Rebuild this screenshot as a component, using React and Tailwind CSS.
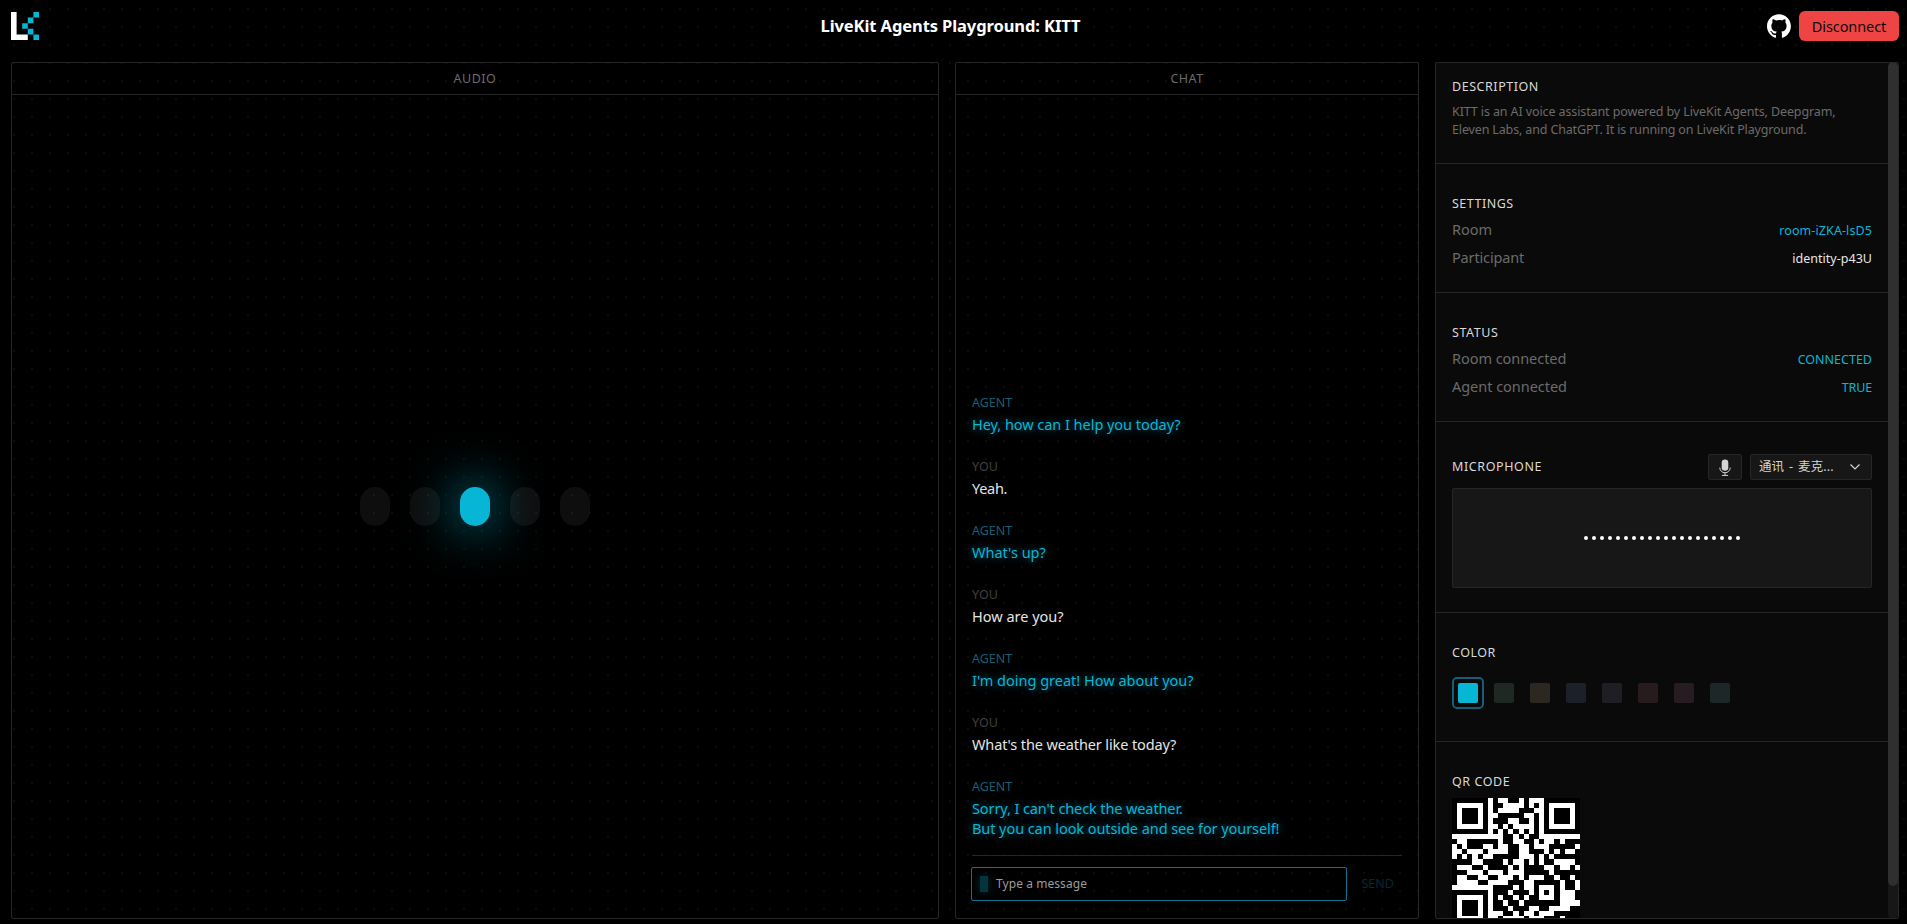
import React from "react";

/* ---- QR code: version 2, error correction M, mask 6 ---- */
const SIZE = 25;

function gfMultiply(x, y) {
  let z = 0;
  for (let i = 7; i >= 0; i--) {
    z = (z << 1) ^ ((z >>> 7) * 0x11d);
    z ^= ((y >>> i) & 1) * x;
  }
  return z;
}

function errorCorrection(data, degree) {
  const divisor = new Array(degree).fill(0);
  divisor[degree - 1] = 1;
  let root = 1;
  for (let i = 0; i < degree; i++) {
    for (let j = 0; j < degree; j++) {
      divisor[j] = gfMultiply(divisor[j], root);
      if (j + 1 < degree) divisor[j] ^= divisor[j + 1];
    }
    root = gfMultiply(root, 2);
  }
  const result = new Array(degree).fill(0);
  for (const b of data) {
    const factor = b ^ result.shift();
    result.push(0);
    divisor.forEach((c, i) => (result[i] ^= gfMultiply(c, factor)));
  }
  return result;
}

function buildQr(text) {
  const bits = [];
  const push = (v, n) => {
    for (let i = n - 1; i >= 0; i--) bits.push((v >>> i) & 1);
  };
  push(4, 4);
  push(text.length, 8);
  for (const ch of text) push(ch.charCodeAt(0), 8);
  push(0, Math.min(4, 28 * 8 - bits.length));
  while (bits.length % 8) bits.push(0);
  for (let pad = 0xec; bits.length < 28 * 8; pad ^= 0xec ^ 0x11) push(pad, 8);
  const data = [];
  for (let i = 0; i < bits.length; i += 8) data.push(parseInt(bits.slice(i, i + 8).join(""), 2));
  const words = data.concat(errorCorrection(data, 16));

  const grid = Array.from({ length: SIZE }, () => new Array(SIZE).fill(null));
  const set = (x, y, v) => {
    if (x >= 0 && y >= 0 && x < SIZE && y < SIZE) grid[y][x] = v ? 1 : 0;
  };
  for (let i = 0; i < SIZE; i++) {
    set(6, i, i % 2 === 0);
    set(i, 6, i % 2 === 0);
  }
  for (const [cx, cy] of [[3, 3], [SIZE - 4, 3], [3, SIZE - 4]]) {
    for (let dy = -4; dy <= 4; dy++)
      for (let dx = -4; dx <= 4; dx++) {
        const d = Math.max(Math.abs(dx), Math.abs(dy));
        set(cx + dx, cy + dy, d !== 2 && d !== 4);
      }
  }
  for (let dy = -2; dy <= 2; dy++)
    for (let dx = -2; dx <= 2; dx++) set(18 + dx, 18 + dy, Math.max(Math.abs(dx), Math.abs(dy)) !== 1);

  const format = 0b100111110010111;
  const bit = (i) => (format >>> i) & 1;
  for (let i = 0; i <= 5; i++) set(8, i, bit(i));
  set(8, 7, bit(6));
  set(8, 8, bit(7));
  set(7, 8, bit(8));
  for (let i = 9; i < 15; i++) set(14 - i, 8, bit(i));
  for (let i = 0; i < 8; i++) set(SIZE - 1 - i, 8, bit(i));
  for (let i = 8; i < 15; i++) set(8, SIZE - 15 + i, bit(i));
  set(8, SIZE - 8, 1);

  let k = 0;
  for (let right = SIZE - 1; right >= 1; right -= 2) {
    if (right === 6) right = 5;
    for (let v = 0; v < SIZE; v++)
      for (let j = 0; j < 2; j++) {
        const x = right - j;
        const upward = ((right + 1) & 2) === 0;
        const y = upward ? SIZE - 1 - v : v;
        if (grid[y][x] !== null) continue;
        const value = k < words.length * 8 ? (words[k >>> 3] >>> (7 - (k & 7))) & 1 : 0;
        k++;
        const mask = ((((x * y) % 2) + ((x * y) % 3)) % 2) === 0 ? 1 : 0;
        grid[y][x] = value ^ mask;
      }
  }
  return grid;
}

function QrCode({ value }) {
  const d = buildQr(value)
    .map((row, y) => row.map((v, x) => (v ? `M${x} ${y}h1v1h-1z` : "")).join(""))
    .join("");
  return (
    <svg className="block shrink-0" width="128" height="128" viewBox="0 0 25 25" shapeRendering="crispEdges">
      <path fill="#fff" d="M0 0h25v25H0z" />
      <path fill="#000" d={d} />
    </svg>
  );
}

function Logo() {
  return (
    <svg className="block" width="28" height="28" viewBox="0 0 28 28" fill="none">
      <path d="M0 0h5.6v22.4h11.2V28H0z" fill="#fff" />
      <g fill="#06b6d4">
        <path d="M22.4 0H28v5.6h-5.6zM16.8 5.6h5.6v5.6h-5.6zM11.2 11.2h5.6v5.6h-5.6zM16.8 16.8h5.6v5.6h-5.6zM22.4 22.4H28V28h-5.6z" />
      </g>
    </svg>
  );
}

function GithubIcon() {
  return (
    <svg className="block" width="24" height="24" viewBox="0 0 98 96" fill="#fff">
      <path
        fillRule="evenodd"
        clipRule="evenodd"
        d="M48.854 0C21.839 0 0 22 0 49.217c0 21.756 13.993 40.172 33.405 46.69 2.427.49 3.316-1.059 3.316-2.362 0-1.141-.08-5.052-.08-9.127-13.59 2.934-16.42-5.867-16.42-5.867-2.184-5.704-5.42-7.17-5.42-7.17-4.448-3.015.324-3.015.324-3.015 4.934.326 7.523 5.052 7.523 5.052 4.367 7.496 11.404 5.378 14.235 4.074.404-3.178 1.699-5.378 3.074-6.6-10.839-1.141-22.243-5.378-22.243-24.283 0-5.378 1.94-9.778 5.014-13.2-.485-1.222-2.184-6.275.486-13.038 0 0 4.125-1.304 13.426 5.052a46.97 46.97 0 0 1 12.214-1.63c4.125 0 8.33.571 12.213 1.63 9.302-6.356 13.427-5.052 13.427-5.052 2.67 6.763.97 11.816.485 13.038 3.155 3.422 5.015 7.822 5.015 13.2 0 18.905-11.404 23.06-22.324 24.283 1.78 1.548 3.316 4.481 3.316 9.126 0 6.6-.08 11.897-.08 13.526 0 1.304.89 2.853 3.316 2.364 19.412-6.52 33.405-24.935 33.405-46.691C97.707 22 75.788 0 48.854 0z"
      />
    </svg>
  );
}

function MicIcon() {
  return (
    <svg className="block" width="12" height="17" viewBox="0 0 12 17" fill="none">
      <rect x="2.7" y="0.4" width="6.6" height="11.4" rx="3.3" fill="#d4d4d4" />
      <path d="M0.8 8.6a5.2 5.2 0 0 0 10.4 0M6 13.8v2.6M2.9 16.4h6.2" stroke="#d4d4d4" strokeWidth="1" />
    </svg>
  );
}

function Panel({ title, className, children }) {
  return (
    <section className={"flex flex-col rounded-xs border border-[#262626] " + className}>
      <div className="flex h-8 shrink-0 items-center justify-center border-b border-[#262626] text-[12.5px] leading-4 tracking-[0.5px] text-[#6b6b6b]">
        {title}
      </div>
      {children}
    </section>
  );
}

function Message({ from, lines }) {
  const agent = from === "AGENT";
  return (
    <div className="flex flex-col gap-1">
      <div className={"-mb-px pt-px text-[12.5px] leading-4 " + (agent ? "text-[#155e75]" : "tracking-[0.1px] text-[#404040]")}>{from}</div>
      <div
        className={
          "text-[14.5px] leading-5 whitespace-nowrap " +
          (agent ? "text-[#06b6d4] [text-shadow:0_0_8px_#0e7490]" : "text-[#e5e5e5]")
        }
      >
        {lines.map(([text, tracking]) => (
          <div key={text} className={tracking}>{text}</div>
        ))}
      </div>
    </div>
  );
}

const MESSAGES = [
  ["AGENT", [["Hey, how can I help you today?", "tracking-[-0.04px]"]]],
  ["YOU", [["Yeah.", "tracking-[-0.3px]"]]],
  ["AGENT", [["What's up?", "tracking-normal"]]],
  ["YOU", [["How are you?", "tracking-normal"]]],
  ["AGENT", [["I'm doing great! How about you?", "tracking-normal"]]],
  ["YOU", [["What's the weather like today?", "tracking-[-0.12px]"]]],
  [
    "AGENT",
    [
      ["Sorry, I can't check the weather.", "tracking-[-0.11px]"],
      ["But you can look outside and see for yourself!", "tracking-[-0.07px]"],
    ],
  ],
];

function Heading({ className = "-mb-px pt-px tracking-[0.55px]", children }) {
  return <h3 className={"text-[12.5px] leading-4 text-[#d9d9d9] " + className}>{children}</h3>;
}

function Row({ label, labelClass = "", value, valueClass }) {
  return (
    <div className="flex h-5 items-baseline justify-between text-[14.5px] leading-5 text-[#6b6b6b]">
      <span className={labelClass}>{label}</span>
      <span className={"text-[12.5px] leading-4 " + valueClass}>{value}</span>
    </div>
  );
}

const SWATCHES = [
  "bg-[#1f2823]",
  "bg-[#2c2720]",
  "bg-[#1c2029]",
  "bg-[#1f1e25]",
  "bg-[#261c1d]",
  "bg-[#261c21]",
  "bg-[#1d2727]",
];

export default function App() {
  return (
    <div className="flex h-[924px] w-full flex-col overflow-hidden bg-black font-['Noto_Sans','Noto_Sans_CJK_SC',sans-serif]">
      <div className="flex min-h-0 flex-1 flex-col bg-[conic-gradient(from_0deg_at_2px_2px,#000_0deg_270deg,#0c0c0c_270deg_360deg)] bg-[size:18px_18px] bg-[position:13px_8px] pr-2 pb-[5px] pl-[11px]">
        <header className="mb-[10px] grid h-[52px] shrink-0 grid-cols-3 items-center">
          <Logo />
          <h1 className="justify-self-center pr-[9px] text-[16.5px] leading-6 font-bold tracking-[-0.09px] whitespace-nowrap text-white">
            LiveKit Agents Playground: KITT
          </h1>
          <div className="flex items-center gap-2 justify-self-end">
            <GithubIcon />
            <button className="h-[30px] w-[100px] rounded-md bg-[#ef4444] text-[14.5px] leading-5 tracking-[-0.09px] text-[#0a0a0a]">
              Disconnect
            </button>
          </div>
        </header>

        <main className="flex min-h-0 flex-1 gap-4">
          <Panel title="AUDIO" className="w-[928px]">
            <div className="flex flex-1 items-center justify-center gap-5">
              <span className="h-[39px] w-[30px] rounded-full bg-white/[0.055]" />
              <span className="h-[39px] w-[30px] rounded-full bg-white/[0.055]" />
              <span className="h-[39px] w-[30px] rounded-full bg-[#06b6d4] shadow-[0_0_50px_#06b6d4]" />
              <span className="h-[39px] w-[30px] rounded-full bg-white/[0.055]" />
              <span className="h-[39px] w-[30px] rounded-full bg-white/[0.055]" />
            </div>
          </Panel>

          <Panel title="CHAT" className="w-[464px]">
            <div className="flex flex-1 flex-col justify-end px-4 pb-[17px]">
              <div className="flex flex-col gap-6 pb-[17px]">
                {MESSAGES.map(([from, lines], i) => (
                  <Message key={i} from={from} lines={lines} />
                ))}
              </div>
              <div className="flex items-center border-t border-[#262626] pt-[11px]">
                <div className="-ml-px flex h-[34px] w-[376px] items-center rounded-xs border border-[#0e7490] pl-2">
                  <span className="mr-2 h-4 w-2 bg-[#06343c] shadow-[0_0_8px_#06343c]" />
                  <span className="text-[12px] leading-4 tracking-[0.07px] text-[#9c9c9c]">Type a message</span>
                </div>
                <span className="ml-[14.5px] text-[12.5px] leading-4 text-[#042a31]">SEND</span>
              </div>
            </div>
          </Panel>

          <aside className="flex w-[464px] overflow-hidden rounded-xs border border-[#262626] bg-[#0a0a0a]">
            <div className="flex w-[452px] flex-col [&>section]:shrink-0 [&>section]:border-[#262626] [&>section]:px-4">
              <section className="border-b pt-[15px] pb-6">
                <Heading>DESCRIPTION</Heading>
                <p className="mt-2 pt-px text-[12.5px] leading-[18px] whitespace-nowrap text-[#6b6b6b]">
                  <span className="block tracking-[-0.11px]">KITT is an AI voice assistant powered by LiveKit Agents, Deepgram,</span>
                  <span className="block tracking-[-0.145px]">Eleven Labs, and ChatGPT. It is running on LiveKit Playground.</span>
                </p>
              </section>

              <section className="flex flex-col gap-2 border-b pt-[31px] pb-[25px]">
                <Heading className="-mb-px pt-px tracking-[0.5px]">SETTINGS</Heading>
                <Row label="Room" value="room-iZKA-lsD5" valueClass="tracking-[0.1px] text-[#06b6d4]" />
                <Row label="Participant" labelClass="tracking-[-0.15px]" value="identity-p43U" valueClass="tracking-[0.02px] text-[#e5e5e5]" />
              </section>

              <section className="flex flex-col gap-2 border-b pt-[31px] pb-[25px]">
                <Heading>STATUS</Heading>
                <Row label="Room connected" labelClass="tracking-[-0.05px]" value="CONNECTED" valueClass="text-[#06b6d4]" />
                <Row label="Agent connected" labelClass="tracking-[-0.03px]" value="TRUE" valueClass="tracking-[-0.15px] text-[#06b6d4]" />
              </section>

              <section className="border-b pt-8 pb-6">
                <div className="flex h-[26px] items-center">
                  <Heading className="mr-auto tracking-[0.6px]">MICROPHONE</Heading>
                  <button className="flex h-[26px] w-[34px] items-center justify-center rounded-xs border border-[#262626] bg-[#171717]">
                    <MicIcon />
                  </button>
                  <button className="ml-2 flex h-[26px] w-[122px] items-center justify-between rounded-xs border border-[#262626] bg-[#171717] pr-[11px] pl-2 text-[12.5px] leading-4 text-[#d4d4d4]">
                    <span className="tracking-[0.1px] whitespace-nowrap [word-spacing:1.5px]">通讯 - 麦克...</span>
                    <svg width="10" height="6" viewBox="0 0 10 6" fill="none">
                      <path d="M0.5 0.5 5 5 9.5 0.5" stroke="#d4d4d4" strokeWidth="1.2" />
                    </svg>
                  </button>
                </div>
                <div className="mt-2 flex h-[100px] items-center justify-center gap-1 rounded-xs border border-[#262626] bg-[#171717]">
                  {Array.from({ length: 20 }, (_, i) => (
                    <span key={i} className="size-1 rounded-full bg-white shadow-[0_0_20px_2px_#06b6d40d]" />
                  ))}
                </div>
              </section>

              <section className="border-b pt-[31px] pb-8">
                <Heading className="-mb-px pt-px tracking-[0.5px]">COLOR</Heading>
                <div className="mt-[17px] flex items-center gap-4">
                  <span className="-mr-1.5 flex size-8 items-center justify-center rounded-[5px] border-2 border-[#155e75]">
                    <span className="size-5 rounded-xs bg-[#06b6d4]" />
                  </span>
                  {SWATCHES.map((c) => (
                    <span key={c} className={"size-5 rounded-xs " + c} />
                  ))}
                </div>
              </section>

              <section className="flex flex-col gap-[9px] pt-[31px]">
                <Heading>QR CODE</Heading>
                <QrCode value="https://kitt.livekit.io/" />
              </section>
            </div>
            <div className="-mt-px h-[857px] w-[10px] shrink-0 rounded-full bg-[#171717]">
              <div className="h-[824px] rounded-full bg-[#2f2f2f]" />
            </div>
          </aside>
        </main>
      </div>
    </div>
  );
}
